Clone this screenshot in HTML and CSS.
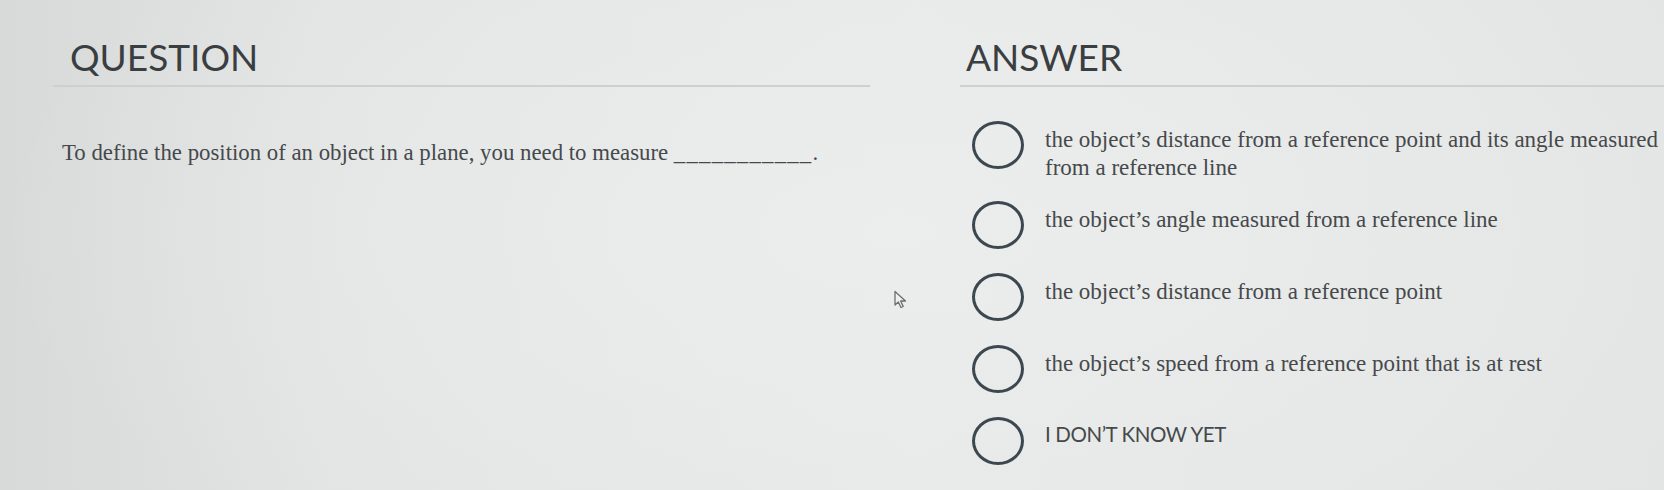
FILE: index.html
```html
<!DOCTYPE html>
<html>
<head>
<meta charset="utf-8">
<link rel="stylesheet" href="styles.css">
</head>
<body>
<div class="page">
  <section class="col question">
    <h2 class="heading">QUESTION</h2>
    <p class="qtext">To define the position of an object in a plane, you need to measure <span class="blank">___________</span>.</p>
  </section>
  <section class="col answer">
    <h2 class="heading">ANSWER</h2>
    <ul class="options">
      <li class="option"><span class="radio"></span><span class="label">the object’s distance from a reference point and its angle measured from a reference line</span></li>
      <li class="option"><span class="radio"></span><span class="label">the object’s angle measured from a reference line</span></li>
      <li class="option"><span class="radio"></span><span class="label">the object’s distance from a reference point</span></li>
      <li class="option"><span class="radio"></span><span class="label">the object’s speed from a reference point that is at rest</span></li>
      <li class="option"><span class="radio"></span><span class="label sans">I DON’T KNOW YET</span></li>
    </ul>
  </section>
</div>
<svg class="cursor" width="18" height="20" viewBox="0 0 18 20"><path d="M2 1.5 L2 15 L5.3 12 L8 17.5 L10.2 16.4 L7.6 11 L12.5 11 Z" fill="#eef0ef" stroke="#6b6f72" stroke-width="1.3" stroke-linejoin="round"/></svg>
</body>
</html>
```
FILE: styles.css
```css
html, body {
  margin: 0;
  padding: 0;
}
body {
  width: 1664px;
  height: 490px;
  overflow: hidden;
  position: relative;
  background:
    radial-gradient(ellipse 900px 420px at 900px 230px, rgba(236,238,237,0.9), rgba(236,238,237,0) 100%),
    linear-gradient(90deg, #d8dad9 0%, #e2e4e3 20%, #e7e9e8 55%, #e3e5e4 100%);
  color: #3d4144;
}
.page {
  display: grid;
  grid-template-columns: 817px 1fr;
  column-gap: 90px;
  padding-left: 53px;
  padding-top: 35px;
}
.heading {
  margin: 0;
  font-family: Lato, "Liberation Sans", sans-serif;
  font-weight: 400;
  font-size: 37px;
  line-height: 44px;
  color: #3a3e41;
  padding-bottom: 6px;
  border-bottom: 2px solid #cdd0cf;
}
.question .heading {
  padding-left: 17px;
}
.answer .heading {
  padding-left: 6px;
}
.qtext {
  margin: 52px 0 0 9px;
  font-family: "Liberation Serif", serif;
  font-size: 22.8px;
  line-height: 28px;
  color: #45494c;
}
.blank {
  letter-spacing: 1.2px;
}
.options {
  list-style: none;
  margin: 34px 0 0 12px;
  padding: 0;
  display: flex;
  flex-direction: column;
  gap: 24px;
}
.option {
  display: flex;
  align-items: flex-start;
  gap: 21px;
}
.radio {
  flex: none;
  width: 46px;
  height: 42px;
  border: 3px solid #3c474f;
  border-radius: 50%;
}
.label {
  flex: none;
  width: 625px;
  padding-top: 5px;
  margin-bottom: -5px;
  font-family: "Liberation Serif", serif;
  font-size: 23px;
  line-height: 28px;
  color: #46494c;
}
.label.sans {
  font-family: Lato, "Liberation Sans", sans-serif;
  font-size: 20.5px;
  letter-spacing: -0.4px;
  padding-top: 3px;
}
.cursor {
  position: absolute;
  left: 893px;
  top: 290px;
}
```
